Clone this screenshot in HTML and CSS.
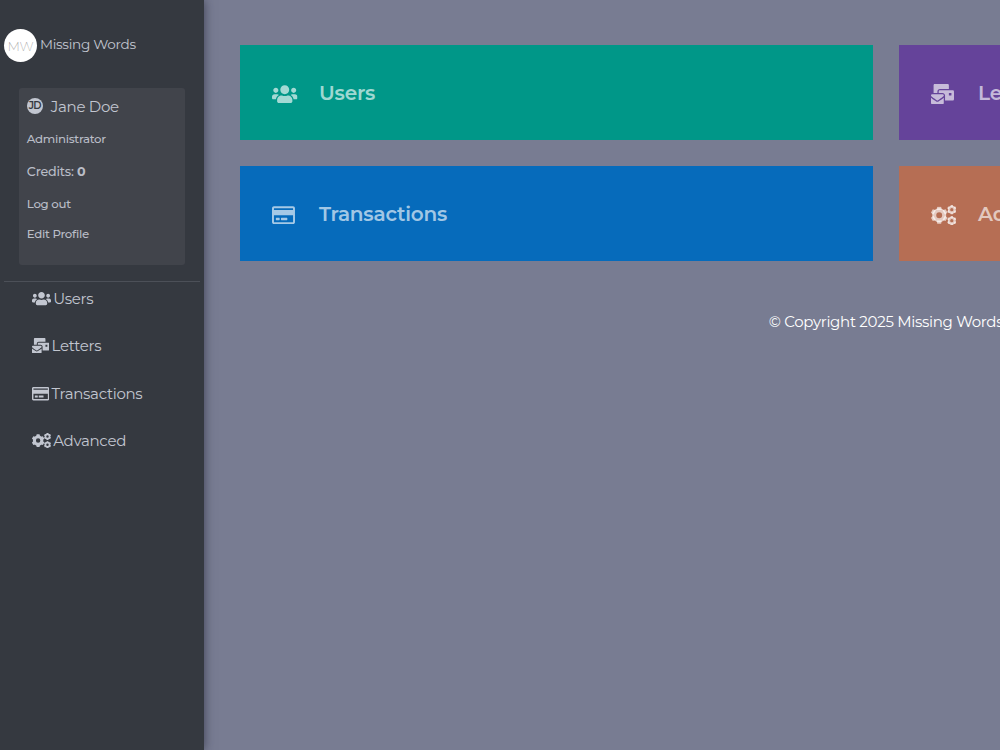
FILE: index.html
```html
<!DOCTYPE html>
<html lang="en">
<head>
<meta charset="utf-8">
<title>Missing Words</title>
<link rel="stylesheet" href="styles.css">
</head>
<body>
<svg class="sprite" aria-hidden="true">
  <symbol id="users" viewBox="0 0 640 512"><path d="M96 224c35.3 0 64-28.700 64-64s-28.700-64-64-64-64 28.700-64 64 28.700 64 64 64zm448 0c35.300 0 64-28.700 64-64s-28.700-64-64-64-64 28.700-64 64 28.700 64 64 64zm32 32h-64c-17.600 0-33.500 7.100-45.100 18.600 40.300 22.100 68.900 62 75.100 109.400h66c17.700 0 32-14.300 32-32v-32c0-35.300-28.700-64-64-64zm-256 0c61.900 0 112-50.100 112-112S381.900 32 320 32 208 82.100 208 144s50.100 112 112 112zm76.800 32h-8.300c-20.800 10-43.900 16-68.500 16s-47.600-6-68.500-16h-8.300C179.600 288 128 339.600 128 403.200V432c0 26.500 21.500 48 48 48h288c26.500 0 48-21.500 48-48v-28.800c0-63.600-51.600-115.200-115.200-115.200zm-223.700-13.400C161.500 263.100 145.600 256 128 256H64c-35.300 0-64 28.700-64 64v32c0 17.700 14.300 32 32 32h65.900c6.300-47.400 34.900-87.300 75.200-109.400z"/></symbol>
  <symbol id="mail" viewBox="0 0 576 512"><path d="M160 448c-25.600 0-51.200-22.400-64-32-64-44.800-83.200-60.800-96-70.400V480c0 17.670 14.330 32 32 32h256c17.670 0 32-14.330 32-32V345.600c-12.800 9.600-32 25.600-96 70.400-12.800 9.600-38.400 32-64 32zm128-192H32c-17.670 0-32 14.330-32 32v16c25.600 19.200 22.400 19.200 115.200 86.400 9.600 6.400 28.800 25.600 44.800 25.600s35.200-19.200 44.800-25.600c92.800-67.200 89.600-67.200 115.200-86.400V288c0-17.670-14.330-32-32-32zm256-96H224c-17.670 0-32 14.330-32 32v32h96c33.210 0 60.590 25.420 63.710 57.820l.290-.220V416h192c17.670 0 32-14.330 32-32V192c0-17.670-14.330-32-32-32zm-32 128h-64v-64h64v64zm-352-96c0-35.290 28.710-64 64-64h224V32c0-17.670-14.330-32-32-32H96C78.330 0 64 14.330 64 32v192h96v-32z"/></symbol>
  <symbol id="card" viewBox="0 0 576 512"><path d="M527.900 32H48.100C21.500 32 0 53.500 0 80v352c0 26.500 21.500 48 48.100 48h479.800c26.600 0 48.100-21.500 48.100-48V80c0-26.500-21.500-48-48.100-48zM54.100 80h467.800c3.300 0 6 2.700 6 6v42H48.100V86c0-3.300 2.700-6 6-6zm467.800 352H54.100c-3.300 0-6-2.700-6-6V256h479.800v170c0 3.300-2.700 6-6 6zM192 332v40c0 6.600-5.400 12-12 12h-72c-6.600 0-12-5.400-12-12v-40c0-6.600 5.400-12 12-12h72c6.600 0 12 5.400 12 12zm192 0v40c0 6.600-5.400 12-12 12H236c-6.600 0-12-5.400-12-12v-40c0-6.600 5.400-12 12-12h136c6.600 0 12 5.400 12 12z"/></symbol>
  <symbol id="gear" viewBox="-100 -100 200 200">
    <circle r="57" fill="none" stroke="currentColor" stroke-width="46"/>
    <path d="M-22-97h44l8 37h-60zM-22 97h44l8-37h-60z"/>
    <path transform="rotate(60)" d="M-22-97h44l8 37h-60zM-22 97h44l8-37h-60z"/>
    <path transform="rotate(120)" d="M-22-97h44l8 37h-60zM-22 97h44l8-37h-60z"/>
  </symbol>
  <symbol id="cogs" viewBox="0 0 640 512">
    <use href="#gear" x="-14" y="36" width="440" height="440"/>
    <use href="#gear" x="400" y="-4" width="244" height="244"/>
    <use href="#gear" x="400" y="272" width="244" height="244"/>
  </symbol>
</svg>
<div class="app">
  <aside class="sidebar">
    <a class="brand"><span class="logo">MW</span><span class="brand-name">Missing Words</span></a>
    <section class="profile">
      <div class="person"><span class="avatar">JD</span><span class="name">Jane Doe</span></div>
      <div class="row role">Administrator</div>
      <div class="row credits">Credits: <b>0</b></div>
      <a class="row logout">Log out</a>
      <a class="row edit">Edit Profile</a>
    </section>
    <nav class="nav">
      <a><svg class="wide"><use href="#users"/></svg><span>Users</span></a>
      <a><svg><use href="#mail"/></svg><span>Letters</span></a>
      <a><svg><use href="#card"/></svg><span>Transactions</span></a>
      <a><svg class="wide"><use href="#cogs"/></svg><span>Advanced</span></a>
    </nav>
  </aside>
  <main class="main">
    <div class="tiles">
      <a class="tile green"><i><svg class="wide"><use href="#users"/></svg></i><span>Users</span></a>
      <a class="tile purple"><i><svg><use href="#mail"/></svg></i><span>Letters</span></a>
      <a class="tile blue"><i><svg><use href="#card"/></svg></i><span>Transactions</span></a>
      <a class="tile orange"><i><svg class="wide"><use href="#cogs"/></svg></i><span>Advanced</span></a>
    </div>
    <footer class="footer">© Copyright 2025 Missing Words</footer>
  </main>
</div>
</body>
</html>
```
FILE: styles.css
```css
* { box-sizing: border-box; }
body { margin: 0; height: 750px; overflow: hidden; background: #787c92; font-family: Montserrat, Inter, sans-serif; letter-spacing: -.3px; }
.sprite { display: none; }
svg { fill: currentColor; flex: none; }
.app { display: flex; height: 750px; }
.sidebar { flex: none; width: 204px; padding: 29px 4px 0; background: #353940; color: #c2c6d0; box-shadow: 0 0 10px rgba(30, 32, 50, .65); }
.brand { display: flex; height: 33px; gap: 3px; }
.logo { width: 33px; height: 33px; border-radius: 50%; background: #fff; color: #999; font-size: 13px; font-weight: 200; line-height: 35px; text-align: center; }
.brand-name { font-size: 13.600px; line-height: 31px; }
.profile { width: 166.500px; height: 176.500px; margin: 26px 0 0 14.500px; padding: 8px 8px 8px 8.300px; border-radius: 3px; background: #41444b; }
.person { display: flex; align-items: center; height: 20px; gap: 8px; }
.avatar { width: 16px; height: 16px; border-radius: 50%; background: #c2c6d0; color: #353940; font-size: 10px; font-weight: 600; line-height: 16px; text-align: center; letter-spacing: -.6px; }
.name { font-size: 15px; line-height: 21px; }
.row { display: block; height: 20px; color: #b9bdc7; font-size: 11.800px; font-weight: 500; line-height: 20px; }
.role { margin-top: 13px; }
.credits { margin-top: 13px; font-size: 12.700px; letter-spacing: -.2px; }
.logout { margin-top: 12px; }
.edit { margin-top: 10px; }
.nav { margin-top: 16px; border-top: 1px solid #4c5058; padding: 4.600px 0 0 27.500px; }
.nav a { display: flex; align-items: center; height: 24px; margin-bottom: 23.600px; gap: 2.700px; font-size: 15px; }
.nav svg { width: 17.300px; height: 15.400px; }
.nav svg.wide { width: 19px; height: 15.200px; }
.main { flex: none; width: 1328px; padding: 45.400px 0 0 36px; }
.tiles { display: grid; grid-template-columns: 632.700px 632.700px; grid-auto-rows: 94.700px; gap: 26.300px; }
.tile { display: flex; align-items: center; padding-left: 32px; color: rgba(255, 255, 255, .64); font-size: 20px; font-weight: 600; letter-spacing: -.2px; }
.tile i { display: flex; width: 47px; padding-top: 3px; }
.tile span { line-height: 24px; }
.tile svg { width: 23px; height: 20.400px; }
.tile svg.wide { width: 25.500px; height: 20.400px; }
.green { background: #009788; }
.purple { background: #65439a; }
.blue { background: #066bbb; }
.orange { background: #b66e54; }
.footer { margin-top: 50.600px; color: #fff; font-size: 15px; line-height: 20px; text-align: center; }
```
